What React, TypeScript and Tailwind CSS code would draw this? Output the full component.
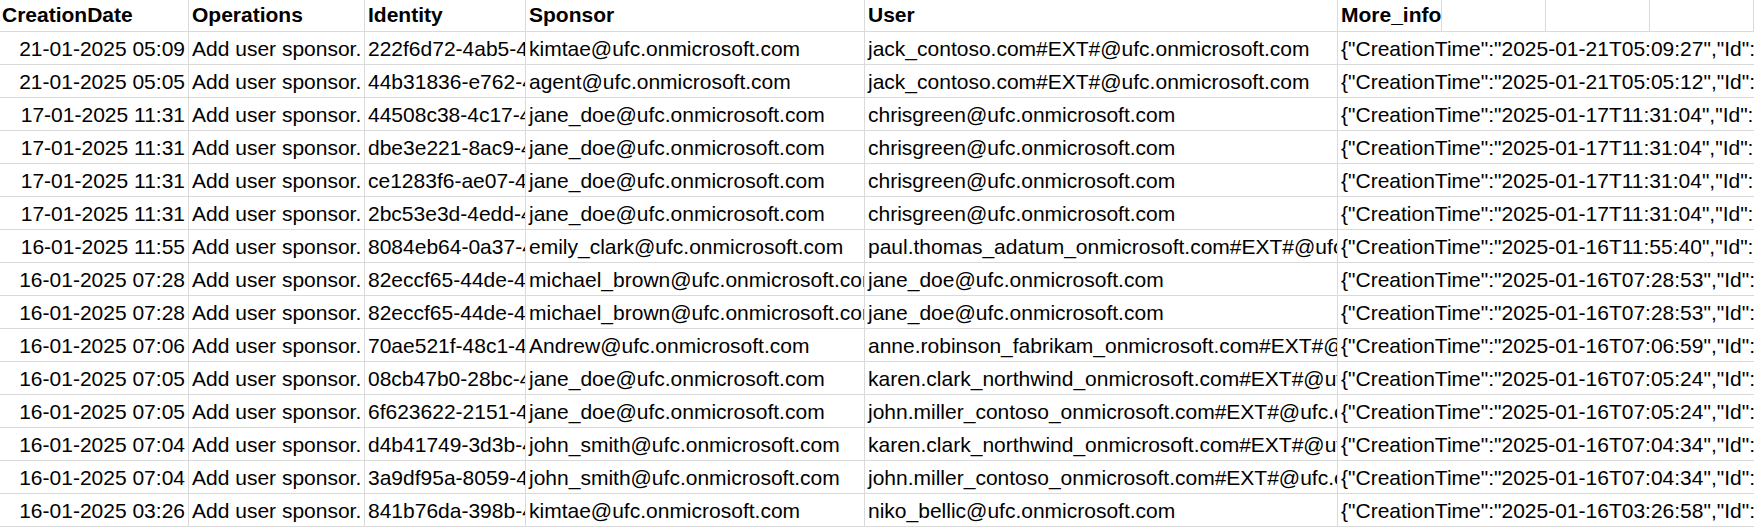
const headers = ["CreationDate", "Operations", "Identity", "Sponsor", "User", "More_info", "", "", ""];

const widths = ["w-[189px]", "w-[176px]", "w-[161px]", "w-[339px]", "w-[473px]", "w-[104px]", "w-[104px]", "w-[104px]", "w-[104px]"];

type Row = {
    date: string;
    identity: string;
    sponsor: string;
    user: string;
    time: string;
};

const rows: Row[] = [
    { date: "21-01-2025 05:09", identity: "222f6d72-4ab5-4f1e-9c2a-7d3b8e6a1f04", sponsor: "kimtae@ufc.onmicrosoft.com", user: "jack_contoso.com#EXT#@ufc.onmicrosoft.com", time: "2025-01-21T05:09:27" },
    { date: "21-01-2025 05:05", identity: "44b31836-e762-4a9d-8b1c-2f6e0d5c9a37", sponsor: "agent@ufc.onmicrosoft.com", user: "jack_contoso.com#EXT#@ufc.onmicrosoft.com", time: "2025-01-21T05:05:12" },
    { date: "17-01-2025 11:31", identity: "44508c38-4c17-4b2e-a6f3-9d1c7e8b0a52", sponsor: "jane_doe@ufc.onmicrosoft.com", user: "chrisgreen@ufc.onmicrosoft.com", time: "2025-01-17T11:31:04" },
    { date: "17-01-2025 11:31", identity: "dbe3e221-8ac9-4e7d-b5a0-3c6f2d9e1b84", sponsor: "jane_doe@ufc.onmicrosoft.com", user: "chrisgreen@ufc.onmicrosoft.com", time: "2025-01-17T11:31:04" },
    { date: "17-01-2025 11:31", identity: "ce1283f6-ae07-4d3c-9f8b-1a5e7c2d6b90", sponsor: "jane_doe@ufc.onmicrosoft.com", user: "chrisgreen@ufc.onmicrosoft.com", time: "2025-01-17T11:31:04" },
    { date: "17-01-2025 11:31", identity: "2bc53e3d-4edd-4a1f-8c7e-6b9d0f3a2e15", sponsor: "jane_doe@ufc.onmicrosoft.com", user: "chrisgreen@ufc.onmicrosoft.com", time: "2025-01-17T11:31:04" },
    { date: "16-01-2025 11:55", identity: "8084eb64-0a37-4c9e-b2d1-5f8a3e7c6d21", sponsor: "emily_clark@ufc.onmicrosoft.com", user: "paul.thomas_adatum_onmicrosoft.com#EXT#@ufc.onmicrosoft.com", time: "2025-01-16T11:55:40" },
    { date: "16-01-2025 07:28", identity: "82eccf65-44de-4b6a-9e3f-0c2d8a1b7f46", sponsor: "michael_brown@ufc.onmicrosoft.com", user: "jane_doe@ufc.onmicrosoft.com", time: "2025-01-16T07:28:53" },
    { date: "16-01-2025 07:28", identity: "82eccf65-44de-4b6a-9e3f-0c2d8a1b7f46", sponsor: "michael_brown@ufc.onmicrosoft.com", user: "jane_doe@ufc.onmicrosoft.com", time: "2025-01-16T07:28:53" },
    { date: "16-01-2025 07:06", identity: "70ae521f-48c1-4d8b-a3e6-9f1c5b2d0e78", sponsor: "Andrew@ufc.onmicrosoft.com", user: "anne.robinson_fabrikam_onmicrosoft.com#EXT#@ufc.onmicrosoft.com", time: "2025-01-16T07:06:59" },
    { date: "16-01-2025 07:05", identity: "08cb47b0-28bc-4f2a-8d9e-3b6c1a7e5f09", sponsor: "jane_doe@ufc.onmicrosoft.com", user: "karen.clark_northwind_onmicrosoft.com#EXT#@ufc.onmicrosoft.com", time: "2025-01-16T07:05:24" },
    { date: "16-01-2025 07:05", identity: "6f623622-2151-4a7c-b9e0-2d5f8c3a1b64", sponsor: "jane_doe@ufc.onmicrosoft.com", user: "john.miller_contoso_onmicrosoft.com#EXT#@ufc.onmicrosoft.com", time: "2025-01-16T07:05:24" },
    { date: "16-01-2025 07:04", identity: "d4b41749-3d3b-4e1f-9a6c-8b2d0f5e7c13", sponsor: "john_smith@ufc.onmicrosoft.com", user: "karen.clark_northwind_onmicrosoft.com#EXT#@ufc.onmicrosoft.com", time: "2025-01-16T07:04:34" },
    { date: "16-01-2025 07:04", identity: "3a9df95a-8059-4c3e-a1b7-6e9f2d4c8a50", sponsor: "john_smith@ufc.onmicrosoft.com", user: "john.miller_contoso_onmicrosoft.com#EXT#@ufc.onmicrosoft.com", time: "2025-01-16T07:04:34" },
    { date: "16-01-2025 03:26", identity: "841b76da-398b-4f5d-8e2a-1c7b9d3f6e82", sponsor: "kimtae@ufc.onmicrosoft.com", user: "niko_bellic@ufc.onmicrosoft.com", time: "2025-01-16T03:26:58" },
];

const cell = "shrink-0 h-full overflow-hidden whitespace-nowrap border-r border-[#dadada] pt-[5px] leading-[24px]";

export default function App() {
    return (
        <div className="w-[1754px] h-[527px] overflow-hidden bg-white text-black text-[21px] font-['Liberation_Sans',Arial,sans-serif]">
            {/* header row */}
            <div className="flex h-[32px] border-b border-[#dadada] font-bold">
                {headers.map((h, i) => (
                    <div key={i} className={`${cell} ${widths[i]} !pt-[3px] ${i === 0 ? "pl-[2px]" : "pl-[3px]"}`}>
                        {h}
                    </div>
                ))}
            </div>

            {rows.map((r, i) => (
                <div key={i} className="flex h-[33px] border-b border-[#dadada]">
                    <div className={`${cell} w-[189px] text-right pr-[3px]`}>{r.date}</div>
                    <div className={`${cell} w-[176px] pl-[3px]`}>Add user sponsor.</div>
                    <div className={`${cell} w-[161px] pl-[3px]`}>{r.identity}</div>
                    <div className={`${cell} w-[339px] pl-[3px]`}>{r.sponsor}</div>
                    <div className={`${cell} w-[473px] pl-[3px]`}>{r.user}</div>
                    {/* More_info spills over the empty columns to its right */}
                    <div className="shrink-0 w-[416px] h-full overflow-hidden whitespace-nowrap pl-[3px] pt-[5px] leading-[24px]">
                        {`{"CreationTime":"${r.time}","Id":"${r.identity}","Operation":"Add user sponsor."}`}
                    </div>
                </div>
            ))}
        </div>
    );
}
